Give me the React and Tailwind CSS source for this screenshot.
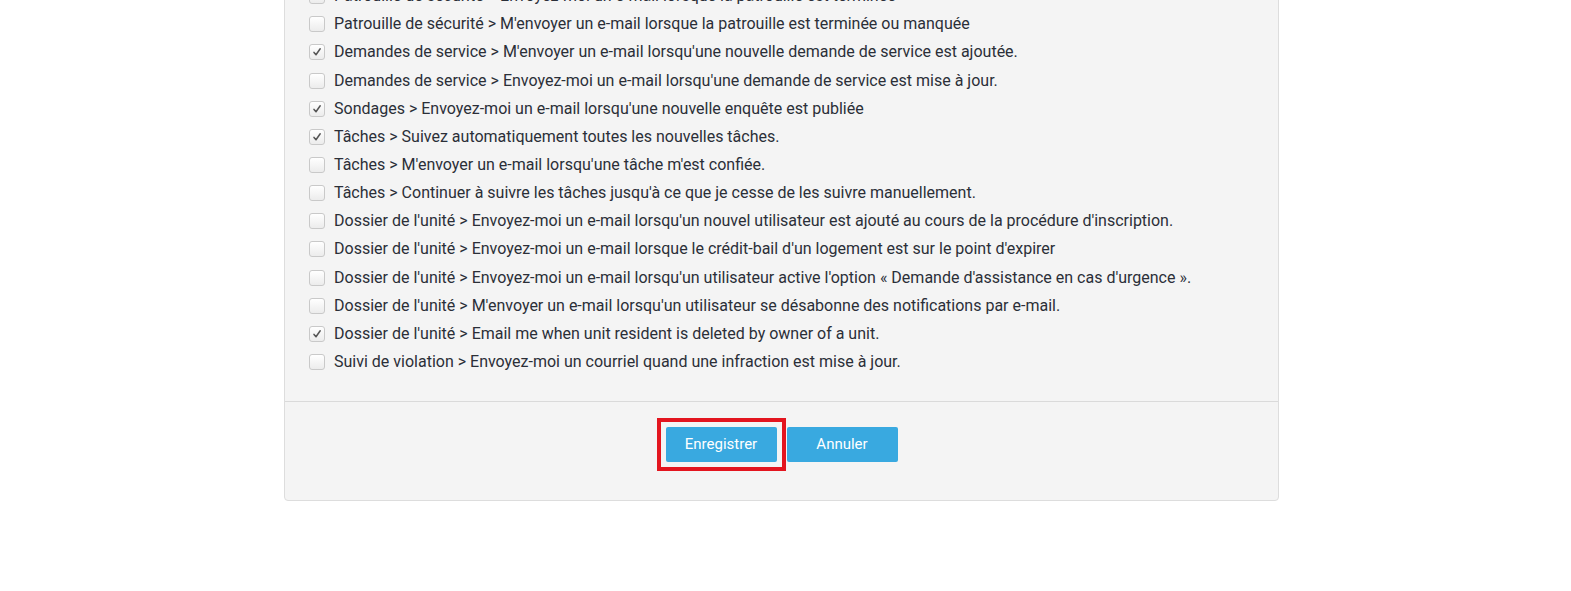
import React from 'react';

const rows = [
  { label: "Patrouille de sécurité > Envoyez-moi un e-mail lorsque la patrouille est terminée", checked: false },
  { label: "Patrouille de sécurité > M'envoyer un e-mail lorsque la patrouille est terminée ou manquée", checked: false },
  { label: "Demandes de service > M'envoyer un e-mail lorsqu'une nouvelle demande de service est ajoutée.", checked: true },
  { label: "Demandes de service > Envoyez-moi un e-mail lorsqu'une demande de service est mise à jour.", checked: false },
  { label: "Sondages > Envoyez-moi un e-mail lorsqu'une nouvelle enquête est publiée", checked: true },
  { label: "Tâches > Suivez automatiquement toutes les nouvelles tâches.", checked: true },
  { label: "Tâches > M'envoyer un e-mail lorsqu'une tâche m'est confiée.", checked: false },
  { label: "Tâches > Continuer à suivre les tâches jusqu'à ce que je cesse de les suivre manuellement.", checked: false },
  { label: "Dossier de l'unité > Envoyez-moi un e-mail lorsqu'un nouvel utilisateur est ajouté au cours de la procédure d'inscription.", checked: false },
  { label: "Dossier de l'unité > Envoyez-moi un e-mail lorsque le crédit-bail d'un logement est sur le point d'expirer", checked: false },
  { label: "Dossier de l'unité > Envoyez-moi un e-mail lorsqu'un utilisateur active l'option « Demande d'assistance en cas d'urgence ».", checked: false },
  { label: "Dossier de l'unité > M'envoyer un e-mail lorsqu'un utilisateur se désabonne des notifications par e-mail.", checked: false },
  { label: "Dossier de l'unité > Email me when unit resident is deleted by owner of a unit.", checked: true },
  { label: "Suivi de violation > Envoyez-moi un courriel quand une infraction est mise à jour.", checked: false },
];

const Checkbox = ({ checked }) => (
  <span className="w-[16px] h-[16px] shrink-0 rounded-[3px] border border-[#c9c9c9] bg-gradient-to-b from-white to-[#ececec] flex items-center justify-center">
    {checked && (
      <svg width="10" height="10" viewBox="0 0 10 10">
        <path d="M2 5.4 L4 7.8 L8.2 1.8" fill="none" stroke="#555" strokeWidth="1.5" strokeLinecap="round" strokeLinejoin="round" />
      </svg>
    )}
  </span>
);

const App = () => {
  return (
    <div className="w-[1571px] h-[591px] bg-white overflow-hidden font-['Roboto',sans-serif]">
      <div className="ml-[284px] w-[995px] -mt-[19px] bg-[#f4f4f4] border border-[#dddddd] rounded-b-[4px]">
        <div className="pl-[24px] pr-4 pb-[25px]">
          {rows.map((r, i) => (
            <label key={i} className="flex items-center gap-[9px] h-[28.17px] text-[16px] text-[#2b2f38]">
              <Checkbox checked={r.checked} />
              <span className="whitespace-nowrap">{r.label}</span>
            </label>
          ))}
        </div>
        <div className="border-t border-[#dadada] h-[99px] flex items-start justify-center pt-[25px] gap-[10px]">
          <div className="outline-[4px] outline-solid outline-[#e3151f] outline-offset-[5px]">
            <button className="w-[111px] h-[35px] bg-[#39a9e0] text-white text-[15px] rounded-[2px]">Enregistrer</button>
          </div>
          <button className="w-[111px] h-[35px] bg-[#39a9e0] text-white text-[15px] rounded-[2px]">Annuler</button>
        </div>
      </div>
    </div>
  );
};

export default App;
